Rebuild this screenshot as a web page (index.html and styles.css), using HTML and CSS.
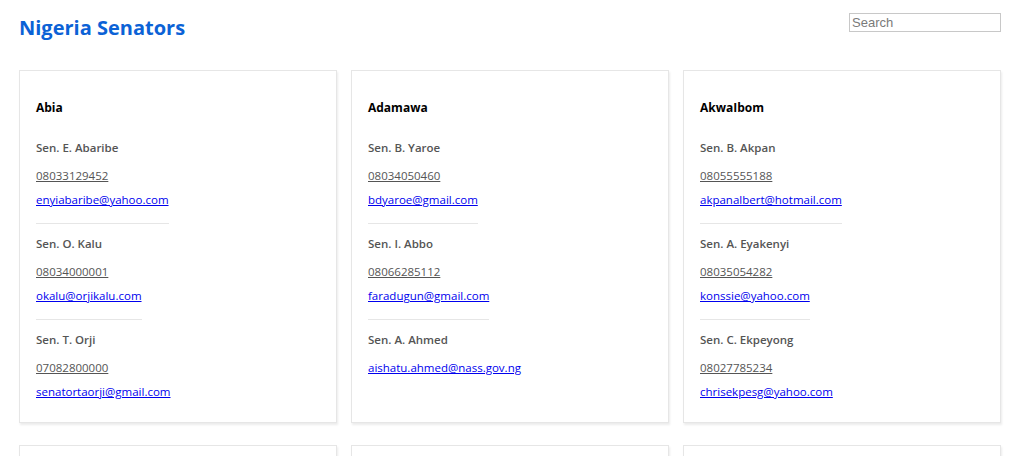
FILE: index.html
```html
<!DOCTYPE html>
<html>
<head>
<meta charset="utf-8">
<link rel="stylesheet" href="styles.css">
</head>
<body>
<header class="topbar">
  <h1 class="title">Nigeria Senators</h1>
  <input class="search" type="text" placeholder="Search">
</header>
<main class="grid">
  <section class="card">
    <h3 class="state">Abia</h3>
    <div class="senator">
      <p class="name">Sen. E. Abaribe</p>
      <p class="phone"><a href="#">08033129452</a></p>
      <p class="email"><a href="#">enyiabaribe@yahoo.com</a></p>
    </div>
    <div class="senator">
      <p class="name">Sen. O. Kalu</p>
      <p class="phone"><a href="#">08034000001</a></p>
      <p class="email"><a href="#">okalu@orjikalu.com</a></p>
    </div>
    <div class="senator">
      <p class="name">Sen. T. Orji</p>
      <p class="phone"><a href="#">07082800000</a></p>
      <p class="email"><a href="#">senatortaorji@gmail.com</a></p>
    </div>
  </section>
  <section class="card">
    <h3 class="state">Adamawa</h3>
    <div class="senator">
      <p class="name">Sen. B. Yaroe</p>
      <p class="phone"><a href="#">08034050460</a></p>
      <p class="email"><a href="#">bdyaroe@gmail.com</a></p>
    </div>
    <div class="senator">
      <p class="name">Sen. I. Abbo</p>
      <p class="phone"><a href="#">08066285112</a></p>
      <p class="email"><a href="#">faradugun@gmail.com</a></p>
    </div>
    <div class="senator">
      <p class="name">Sen. A. Ahmed</p>
      <p class="email"><a href="#">aishatu.ahmed@nass.gov.ng</a></p>
    </div>
  </section>
  <section class="card">
    <h3 class="state">AkwaIbom</h3>
    <div class="senator">
      <p class="name">Sen. B. Akpan</p>
      <p class="phone"><a href="#">08055555188</a></p>
      <p class="email"><a href="#">akpanalbert@hotmail.com</a></p>
    </div>
    <div class="senator">
      <p class="name">Sen. A. Eyakenyi</p>
      <p class="phone"><a href="#">08035054282</a></p>
      <p class="email"><a href="#">konssie@yahoo.com</a></p>
    </div>
    <div class="senator">
      <p class="name">Sen. C. Ekpeyong</p>
      <p class="phone"><a href="#">08027785234</a></p>
      <p class="email"><a href="#">chrisekpesg@yahoo.com</a></p>
    </div>
  </section>
  <section class="card"></section>
  <section class="card"></section>
  <section class="card"></section>
</main>
</body>
</html>
```

FILE: styles.css
```css
* { box-sizing: border-box; }
html, body { margin: 0; padding: 0; background: #fff; }
body {
  font-family: "Open Sans", "Noto Sans", sans-serif;
  font-size: 11.5px;
  color: #555;
  padding: 0 23px 0 19px;
}
.topbar {
  display: flex;
  justify-content: space-between;
  align-items: flex-start;
  height: 70px;
}
.title {
  margin: 15px 0 0 0;
  font-size: 20px;
  font-weight: 700;
  color: #0b62d6;
  line-height: 26px;
}
.search {
  margin-top: 13px;
  width: 152px;
  height: 19px;
  border: 1px solid #c8c8c8;
  padding: 0 2px;
  font-family: "Liberation Sans", Arial, sans-serif;
  font-size: 13px;
  color: #333;
}
.search::placeholder { color: #7a7a7a; }
.grid {
  display: grid;
  grid-template-columns: repeat(3, 1fr);
  gap: 22px 14px;
}
.card {
  border: 1px solid #e6e6e6;
  box-shadow: 1px 2px 2px rgba(0,0,0,0.08);
  padding: 24px 16px 18px 16px;
  min-height: 353px;
  display: flex;
  flex-direction: column;
  align-items: flex-start;
}
.state {
  margin: 0 0 15px 0;
  font-size: 12px;
  font-weight: 700;
  color: #000;
  line-height: 26px;
}
.senator {
  display: flex;
  flex-direction: column;
  align-items: flex-start;
}
.senator:not(:last-child) {
  border-bottom: 1px solid #e6e6e6;
  padding-bottom: 11px;
  margin-bottom: 8px;
}
.senator p { margin: 0; line-height: 24px; }
.senator .name { font-weight: 600; color: #555; margin-bottom: 4px; }
.phone a { color: #555; }
.email a { color: #0000ee; }
```
